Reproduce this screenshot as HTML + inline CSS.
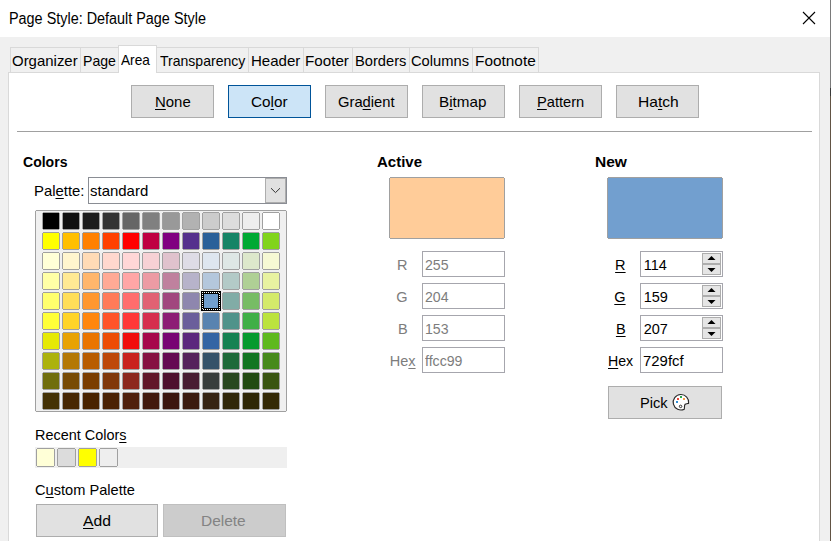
<!DOCTYPE html>
<html><head><meta charset="utf-8"><style>
html,body{margin:0;padding:0;width:831px;height:541px;overflow:hidden;background:#f0f0f0;font-family:"Liberation Sans", sans-serif;}
u{text-decoration:underline;text-underline-offset:2px;text-decoration-thickness:1px}
</style></head><body>
<div style="position:absolute;left:0px;top:0px;width:831px;height:37px;background:#fff"></div>
<div style="position:absolute;left:0px;top:37px;width:831px;height:504px;background:#f0f0f0"></div>
<div style="position:absolute;left:830px;top:0px;width:1px;height:88px;background:#7a7a7a"></div>
<div style="position:absolute;left:830px;top:88px;width:1px;height:8px;background:#3a3a3a"></div>
<div style="position:absolute;left:830px;top:96px;width:1px;height:445px;background:#625444"></div>
<div style="position:absolute;left:8.87px;top:10.95px;font-size:15.6px;line-height:15.6px;color:#000;white-space:nowrap;transform:scaleX(0.9233);transform-origin:0 0;">Page Style: Default Page Style</div>
<svg style="position:absolute;left:802px;top:11px" width="14" height="14" viewBox="0 0 14 14"><path d="M1 1L13 13M13 1L1 13" stroke="#000" stroke-width="1.1"/></svg>
<div style="position:absolute;left:8px;top:72px;width:812px;height:470px;background:#fff;border:1px solid #d9d9d9;box-sizing:border-box"></div>
<div style="position:absolute;left:10px;top:47px;width:71px;height:25px;background:#f0f0f0;border:1px solid #d9d9d9;box-sizing:border-box;border-bottom:none"></div>
<div style="position:absolute;left:80px;top:47px;width:39px;height:25px;background:#f0f0f0;border:1px solid #d9d9d9;box-sizing:border-box;border-bottom:none"></div>
<div style="position:absolute;left:118px;top:45px;width:39px;height:28px;background:#fff;border:1px solid #d9d9d9;box-sizing:border-box;border-bottom:none"></div>
<div style="position:absolute;left:156px;top:47px;width:93px;height:25px;background:#f0f0f0;border:1px solid #d9d9d9;box-sizing:border-box;border-bottom:none"></div>
<div style="position:absolute;left:248px;top:47px;width:56px;height:25px;background:#f0f0f0;border:1px solid #d9d9d9;box-sizing:border-box;border-bottom:none"></div>
<div style="position:absolute;left:303px;top:47px;width:50px;height:25px;background:#f0f0f0;border:1px solid #d9d9d9;box-sizing:border-box;border-bottom:none"></div>
<div style="position:absolute;left:352px;top:47px;width:58px;height:25px;background:#f0f0f0;border:1px solid #d9d9d9;box-sizing:border-box;border-bottom:none"></div>
<div style="position:absolute;left:409px;top:47px;width:64px;height:25px;background:#f0f0f0;border:1px solid #d9d9d9;box-sizing:border-box;border-bottom:none"></div>
<div style="position:absolute;left:472px;top:47px;width:67px;height:25px;background:#f0f0f0;border:1px solid #d9d9d9;box-sizing:border-box;border-bottom:none"></div>
<div style="position:absolute;left:11.67px;top:54.00px;font-size:14.5px;line-height:14.5px;color:#000;white-space:nowrap;transform:scaleX(1.0314);transform-origin:0 0;">Organizer</div>
<div style="position:absolute;left:82.82px;top:54.00px;font-size:14.5px;line-height:14.5px;color:#000;white-space:nowrap;transform:scaleX(0.9725);transform-origin:0 0;">Page</div>
<div style="position:absolute;left:120.88px;top:53.00px;font-size:14.5px;line-height:14.5px;color:#000;white-space:nowrap;transform:scaleX(0.9408);transform-origin:0 0;">Area</div>
<div style="position:absolute;left:159.56px;top:54.00px;font-size:14.5px;line-height:14.5px;color:#000;white-space:nowrap;transform:scaleX(0.9679);transform-origin:0 0;">Transparency</div>
<div style="position:absolute;left:250.59px;top:54.00px;font-size:14.5px;line-height:14.5px;color:#000;white-space:nowrap;transform:scaleX(1.0385);transform-origin:0 0;">Header</div>
<div style="position:absolute;left:305.24px;top:54.00px;font-size:14.5px;line-height:14.5px;color:#000;white-space:nowrap;transform:scaleX(1.0481);transform-origin:0 0;">Footer</div>
<div style="position:absolute;left:354.50px;top:54.00px;font-size:14.5px;line-height:14.5px;color:#000;white-space:nowrap;transform:scaleX(1.0113);transform-origin:0 0;">Borders</div>
<div style="position:absolute;left:411.18px;top:54.00px;font-size:14.5px;line-height:14.5px;color:#000;white-space:nowrap;transform:scaleX(1.0135);transform-origin:0 0;">Columns</div>
<div style="position:absolute;left:474.58px;top:54.00px;font-size:14.5px;line-height:14.5px;color:#000;white-space:nowrap;transform:scaleX(1.0606);transform-origin:0 0;">Footnote</div>
<div style="position:absolute;left:131px;top:85px;width:83px;height:33px;background:#e1e1e1;border:1px solid #adadad;box-sizing:border-box"></div>
<div style="position:absolute;left:154.68px;top:95.00px;font-size:14.5px;line-height:14.5px;color:#000;white-space:nowrap;transform:scaleX(1.0298);transform-origin:0 0;"><u>N</u>one</div>
<div style="position:absolute;left:228px;top:85px;width:83px;height:33px;background:#cce4f7;border:1px solid #005499;box-sizing:border-box"></div>
<div style="position:absolute;left:250.74px;top:95.00px;font-size:14.5px;line-height:14.5px;color:#000;white-space:nowrap;transform:scaleX(1.0533);transform-origin:0 0;">Co<u>l</u>or</div>
<div style="position:absolute;left:325px;top:85px;width:83px;height:33px;background:#e1e1e1;border:1px solid #adadad;box-sizing:border-box"></div>
<div style="position:absolute;left:337.98px;top:95.00px;font-size:14.5px;line-height:14.5px;color:#000;white-space:nowrap;transform:scaleX(1.0176);transform-origin:0 0;">Gra<u>d</u>ient</div>
<div style="position:absolute;left:422px;top:85px;width:83px;height:33px;background:#e1e1e1;border:1px solid #adadad;box-sizing:border-box"></div>
<div style="position:absolute;left:438.79px;top:95.00px;font-size:14.5px;line-height:14.5px;color:#000;white-space:nowrap;transform:scaleX(1.0497);transform-origin:0 0;">B<u>i</u>tmap</div>
<div style="position:absolute;left:519px;top:85px;width:83px;height:33px;background:#e1e1e1;border:1px solid #adadad;box-sizing:border-box"></div>
<div style="position:absolute;left:537.20px;top:95.00px;font-size:14.5px;line-height:14.5px;color:#000;white-space:nowrap;transform:scaleX(1.0099);transform-origin:0 0;"><u>P</u>attern</div>
<div style="position:absolute;left:616px;top:85px;width:83px;height:33px;background:#e1e1e1;border:1px solid #adadad;box-sizing:border-box"></div>
<div style="position:absolute;left:637.58px;top:95.00px;font-size:14.5px;line-height:14.5px;color:#000;white-space:nowrap;transform:scaleX(1.0749);transform-origin:0 0;">Ha<u>t</u>ch</div>
<div style="position:absolute;left:17px;top:131px;width:795px;height:1px;background:#a0a0a0"></div>
<div style="position:absolute;left:22.83px;top:155.00px;font-size:14.5px;line-height:14.5px;color:#000;white-space:nowrap;font-weight:bold;transform:scaleX(0.9677);transform-origin:0 0;">Colors</div>
<div style="position:absolute;left:34.48px;top:184.00px;font-size:14.5px;line-height:14.5px;color:#000;white-space:nowrap;transform:scaleX(1.0254);transform-origin:0 0;">Pal<u>e</u>tte:</div>
<div style="position:absolute;left:88px;top:177px;width:199px;height:27px;background:#fff;border:1px solid #8a8d94;box-sizing:border-box"></div>
<div style="position:absolute;left:265px;top:178px;width:21px;height:25px;background:#e1e1e1;border:1px solid #adadad;box-sizing:border-box"></div>
<svg style="position:absolute;left:265px;top:178px" width="21" height="25" viewBox="0 0 21 25"><path d="M6 10.2L10.5 14.6L15 10.2" fill="none" stroke="#333" stroke-width="1"/></svg>
<div style="position:absolute;left:89.72px;top:184.00px;font-size:14.5px;line-height:14.5px;color:#000;white-space:nowrap;transform:scaleX(1.0323);transform-origin:0 0;">standard</div>
<svg style="position:absolute;left:0;top:0" width="831" height="541" shape-rendering="crispEdges"><rect x="35" y="210" width="252" height="202" fill="#f0f0f0"/><rect x="36" y="210" width="250" height="1" fill="#a0a0a0"/><rect x="36" y="411" width="250" height="1" fill="#a0a0a0"/><rect x="35" y="211" width="1" height="200" fill="#a0a0a0"/><rect x="286" y="211" width="1" height="200" fill="#a0a0a0"/><rect x="43" y="212" width="16" height="18" fill="#a0a0a0"/><rect x="42" y="213" width="18" height="16" fill="#a0a0a0"/><rect x="43" y="213" width="16" height="16" fill="#000000"/><rect x="63" y="212" width="16" height="18" fill="#a0a0a0"/><rect x="62" y="213" width="18" height="16" fill="#a0a0a0"/><rect x="63" y="213" width="16" height="16" fill="#111111"/><rect x="83" y="212" width="16" height="18" fill="#a0a0a0"/><rect x="82" y="213" width="18" height="16" fill="#a0a0a0"/><rect x="83" y="213" width="16" height="16" fill="#1c1c1c"/><rect x="103" y="212" width="16" height="18" fill="#a0a0a0"/><rect x="102" y="213" width="18" height="16" fill="#a0a0a0"/><rect x="103" y="213" width="16" height="16" fill="#333333"/><rect x="123" y="212" width="16" height="18" fill="#a0a0a0"/><rect x="122" y="213" width="18" height="16" fill="#a0a0a0"/><rect x="123" y="213" width="16" height="16" fill="#666666"/><rect x="143" y="212" width="16" height="18" fill="#a0a0a0"/><rect x="142" y="213" width="18" height="16" fill="#a0a0a0"/><rect x="143" y="213" width="16" height="16" fill="#808080"/><rect x="163" y="212" width="16" height="18" fill="#a0a0a0"/><rect x="162" y="213" width="18" height="16" fill="#a0a0a0"/><rect x="163" y="213" width="16" height="16" fill="#999999"/><rect x="183" y="212" width="16" height="18" fill="#a0a0a0"/><rect x="182" y="213" width="18" height="16" fill="#a0a0a0"/><rect x="183" y="213" width="16" height="16" fill="#b2b2b2"/><rect x="203" y="212" width="16" height="18" fill="#a0a0a0"/><rect x="202" y="213" width="18" height="16" fill="#a0a0a0"/><rect x="203" y="213" width="16" height="16" fill="#cccccc"/><rect x="223" y="212" width="16" height="18" fill="#a0a0a0"/><rect x="222" y="213" width="18" height="16" fill="#a0a0a0"/><rect x="223" y="213" width="16" height="16" fill="#dddddd"/><rect x="243" y="212" width="16" height="18" fill="#a0a0a0"/><rect x="242" y="213" width="18" height="16" fill="#a0a0a0"/><rect x="243" y="213" width="16" height="16" fill="#eeeeee"/><rect x="263" y="212" width="16" height="18" fill="#a0a0a0"/><rect x="262" y="213" width="18" height="16" fill="#a0a0a0"/><rect x="263" y="213" width="16" height="16" fill="#ffffff"/><rect x="43" y="232" width="16" height="18" fill="#a0a0a0"/><rect x="42" y="233" width="18" height="16" fill="#a0a0a0"/><rect x="43" y="233" width="16" height="16" fill="#ffff00"/><rect x="63" y="232" width="16" height="18" fill="#a0a0a0"/><rect x="62" y="233" width="18" height="16" fill="#a0a0a0"/><rect x="63" y="233" width="16" height="16" fill="#ffbf00"/><rect x="83" y="232" width="16" height="18" fill="#a0a0a0"/><rect x="82" y="233" width="18" height="16" fill="#a0a0a0"/><rect x="83" y="233" width="16" height="16" fill="#ff8000"/><rect x="103" y="232" width="16" height="18" fill="#a0a0a0"/><rect x="102" y="233" width="18" height="16" fill="#a0a0a0"/><rect x="103" y="233" width="16" height="16" fill="#ff4000"/><rect x="123" y="232" width="16" height="18" fill="#a0a0a0"/><rect x="122" y="233" width="18" height="16" fill="#a0a0a0"/><rect x="123" y="233" width="16" height="16" fill="#ff0000"/><rect x="143" y="232" width="16" height="18" fill="#a0a0a0"/><rect x="142" y="233" width="18" height="16" fill="#a0a0a0"/><rect x="143" y="233" width="16" height="16" fill="#bf0041"/><rect x="163" y="232" width="16" height="18" fill="#a0a0a0"/><rect x="162" y="233" width="18" height="16" fill="#a0a0a0"/><rect x="163" y="233" width="16" height="16" fill="#800080"/><rect x="183" y="232" width="16" height="18" fill="#a0a0a0"/><rect x="182" y="233" width="18" height="16" fill="#a0a0a0"/><rect x="183" y="233" width="16" height="16" fill="#55308d"/><rect x="203" y="232" width="16" height="18" fill="#a0a0a0"/><rect x="202" y="233" width="18" height="16" fill="#a0a0a0"/><rect x="203" y="233" width="16" height="16" fill="#2a6099"/><rect x="223" y="232" width="16" height="18" fill="#a0a0a0"/><rect x="222" y="233" width="18" height="16" fill="#a0a0a0"/><rect x="223" y="233" width="16" height="16" fill="#158466"/><rect x="243" y="232" width="16" height="18" fill="#a0a0a0"/><rect x="242" y="233" width="18" height="16" fill="#a0a0a0"/><rect x="243" y="233" width="16" height="16" fill="#00a933"/><rect x="263" y="232" width="16" height="18" fill="#a0a0a0"/><rect x="262" y="233" width="18" height="16" fill="#a0a0a0"/><rect x="263" y="233" width="16" height="16" fill="#81d41a"/><rect x="43" y="252" width="16" height="18" fill="#a0a0a0"/><rect x="42" y="253" width="18" height="16" fill="#a0a0a0"/><rect x="43" y="253" width="16" height="16" fill="#ffffd7"/><rect x="63" y="252" width="16" height="18" fill="#a0a0a0"/><rect x="62" y="253" width="18" height="16" fill="#a0a0a0"/><rect x="63" y="253" width="16" height="16" fill="#fff5ce"/><rect x="83" y="252" width="16" height="18" fill="#a0a0a0"/><rect x="82" y="253" width="18" height="16" fill="#a0a0a0"/><rect x="83" y="253" width="16" height="16" fill="#ffdbb6"/><rect x="103" y="252" width="16" height="18" fill="#a0a0a0"/><rect x="102" y="253" width="18" height="16" fill="#a0a0a0"/><rect x="103" y="253" width="16" height="16" fill="#ffd8ce"/><rect x="123" y="252" width="16" height="18" fill="#a0a0a0"/><rect x="122" y="253" width="18" height="16" fill="#a0a0a0"/><rect x="123" y="253" width="16" height="16" fill="#ffd7d7"/><rect x="143" y="252" width="16" height="18" fill="#a0a0a0"/><rect x="142" y="253" width="18" height="16" fill="#a0a0a0"/><rect x="143" y="253" width="16" height="16" fill="#f7d1d5"/><rect x="163" y="252" width="16" height="18" fill="#a0a0a0"/><rect x="162" y="253" width="18" height="16" fill="#a0a0a0"/><rect x="163" y="253" width="16" height="16" fill="#e0c2cd"/><rect x="183" y="252" width="16" height="18" fill="#a0a0a0"/><rect x="182" y="253" width="18" height="16" fill="#a0a0a0"/><rect x="183" y="253" width="16" height="16" fill="#dedce6"/><rect x="203" y="252" width="16" height="18" fill="#a0a0a0"/><rect x="202" y="253" width="18" height="16" fill="#a0a0a0"/><rect x="203" y="253" width="16" height="16" fill="#dee6ef"/><rect x="223" y="252" width="16" height="18" fill="#a0a0a0"/><rect x="222" y="253" width="18" height="16" fill="#a0a0a0"/><rect x="223" y="253" width="16" height="16" fill="#dee7e5"/><rect x="243" y="252" width="16" height="18" fill="#a0a0a0"/><rect x="242" y="253" width="18" height="16" fill="#a0a0a0"/><rect x="243" y="253" width="16" height="16" fill="#dde8cb"/><rect x="263" y="252" width="16" height="18" fill="#a0a0a0"/><rect x="262" y="253" width="18" height="16" fill="#a0a0a0"/><rect x="263" y="253" width="16" height="16" fill="#f6f9d4"/><rect x="43" y="272" width="16" height="18" fill="#a0a0a0"/><rect x="42" y="273" width="18" height="16" fill="#a0a0a0"/><rect x="43" y="273" width="16" height="16" fill="#ffffa6"/><rect x="63" y="272" width="16" height="18" fill="#a0a0a0"/><rect x="62" y="273" width="18" height="16" fill="#a0a0a0"/><rect x="63" y="273" width="16" height="16" fill="#ffe994"/><rect x="83" y="272" width="16" height="18" fill="#a0a0a0"/><rect x="82" y="273" width="18" height="16" fill="#a0a0a0"/><rect x="83" y="273" width="16" height="16" fill="#ffb66c"/><rect x="103" y="272" width="16" height="18" fill="#a0a0a0"/><rect x="102" y="273" width="18" height="16" fill="#a0a0a0"/><rect x="103" y="273" width="16" height="16" fill="#ffaa95"/><rect x="123" y="272" width="16" height="18" fill="#a0a0a0"/><rect x="122" y="273" width="18" height="16" fill="#a0a0a0"/><rect x="123" y="273" width="16" height="16" fill="#ffa6a6"/><rect x="143" y="272" width="16" height="18" fill="#a0a0a0"/><rect x="142" y="273" width="18" height="16" fill="#a0a0a0"/><rect x="143" y="273" width="16" height="16" fill="#ec9ba4"/><rect x="163" y="272" width="16" height="18" fill="#a0a0a0"/><rect x="162" y="273" width="18" height="16" fill="#a0a0a0"/><rect x="163" y="273" width="16" height="16" fill="#bf819e"/><rect x="183" y="272" width="16" height="18" fill="#a0a0a0"/><rect x="182" y="273" width="18" height="16" fill="#a0a0a0"/><rect x="183" y="273" width="16" height="16" fill="#b7b3ca"/><rect x="203" y="272" width="16" height="18" fill="#a0a0a0"/><rect x="202" y="273" width="18" height="16" fill="#a0a0a0"/><rect x="203" y="273" width="16" height="16" fill="#b4c7dc"/><rect x="223" y="272" width="16" height="18" fill="#a0a0a0"/><rect x="222" y="273" width="18" height="16" fill="#a0a0a0"/><rect x="223" y="273" width="16" height="16" fill="#b3cac7"/><rect x="243" y="272" width="16" height="18" fill="#a0a0a0"/><rect x="242" y="273" width="18" height="16" fill="#a0a0a0"/><rect x="243" y="273" width="16" height="16" fill="#afd095"/><rect x="263" y="272" width="16" height="18" fill="#a0a0a0"/><rect x="262" y="273" width="18" height="16" fill="#a0a0a0"/><rect x="263" y="273" width="16" height="16" fill="#e8f2a1"/><rect x="43" y="292" width="16" height="18" fill="#a0a0a0"/><rect x="42" y="293" width="18" height="16" fill="#a0a0a0"/><rect x="43" y="293" width="16" height="16" fill="#ffff6d"/><rect x="63" y="292" width="16" height="18" fill="#a0a0a0"/><rect x="62" y="293" width="18" height="16" fill="#a0a0a0"/><rect x="63" y="293" width="16" height="16" fill="#ffde59"/><rect x="83" y="292" width="16" height="18" fill="#a0a0a0"/><rect x="82" y="293" width="18" height="16" fill="#a0a0a0"/><rect x="83" y="293" width="16" height="16" fill="#ff972f"/><rect x="103" y="292" width="16" height="18" fill="#a0a0a0"/><rect x="102" y="293" width="18" height="16" fill="#a0a0a0"/><rect x="103" y="293" width="16" height="16" fill="#ff7b59"/><rect x="123" y="292" width="16" height="18" fill="#a0a0a0"/><rect x="122" y="293" width="18" height="16" fill="#a0a0a0"/><rect x="123" y="293" width="16" height="16" fill="#ff6d6d"/><rect x="143" y="292" width="16" height="18" fill="#a0a0a0"/><rect x="142" y="293" width="18" height="16" fill="#a0a0a0"/><rect x="143" y="293" width="16" height="16" fill="#e16173"/><rect x="163" y="292" width="16" height="18" fill="#a0a0a0"/><rect x="162" y="293" width="18" height="16" fill="#a0a0a0"/><rect x="163" y="293" width="16" height="16" fill="#a1467e"/><rect x="183" y="292" width="16" height="18" fill="#a0a0a0"/><rect x="182" y="293" width="18" height="16" fill="#a0a0a0"/><rect x="183" y="293" width="16" height="16" fill="#8e86ae"/><rect x="223" y="292" width="16" height="18" fill="#a0a0a0"/><rect x="222" y="293" width="18" height="16" fill="#a0a0a0"/><rect x="223" y="293" width="16" height="16" fill="#81aca6"/><rect x="243" y="292" width="16" height="18" fill="#a0a0a0"/><rect x="242" y="293" width="18" height="16" fill="#a0a0a0"/><rect x="243" y="293" width="16" height="16" fill="#77bc65"/><rect x="263" y="292" width="16" height="18" fill="#a0a0a0"/><rect x="262" y="293" width="18" height="16" fill="#a0a0a0"/><rect x="263" y="293" width="16" height="16" fill="#d4ea6b"/><rect x="43" y="312" width="16" height="18" fill="#a0a0a0"/><rect x="42" y="313" width="18" height="16" fill="#a0a0a0"/><rect x="43" y="313" width="16" height="16" fill="#ffff38"/><rect x="63" y="312" width="16" height="18" fill="#a0a0a0"/><rect x="62" y="313" width="18" height="16" fill="#a0a0a0"/><rect x="63" y="313" width="16" height="16" fill="#ffd428"/><rect x="83" y="312" width="16" height="18" fill="#a0a0a0"/><rect x="82" y="313" width="18" height="16" fill="#a0a0a0"/><rect x="83" y="313" width="16" height="16" fill="#ff860d"/><rect x="103" y="312" width="16" height="18" fill="#a0a0a0"/><rect x="102" y="313" width="18" height="16" fill="#a0a0a0"/><rect x="103" y="313" width="16" height="16" fill="#ff5429"/><rect x="123" y="312" width="16" height="18" fill="#a0a0a0"/><rect x="122" y="313" width="18" height="16" fill="#a0a0a0"/><rect x="123" y="313" width="16" height="16" fill="#ff3838"/><rect x="143" y="312" width="16" height="18" fill="#a0a0a0"/><rect x="142" y="313" width="18" height="16" fill="#a0a0a0"/><rect x="143" y="313" width="16" height="16" fill="#d62e4e"/><rect x="163" y="312" width="16" height="18" fill="#a0a0a0"/><rect x="162" y="313" width="18" height="16" fill="#a0a0a0"/><rect x="163" y="313" width="16" height="16" fill="#8d1d75"/><rect x="183" y="312" width="16" height="18" fill="#a0a0a0"/><rect x="182" y="313" width="18" height="16" fill="#a0a0a0"/><rect x="183" y="313" width="16" height="16" fill="#6b5e9b"/><rect x="203" y="312" width="16" height="18" fill="#a0a0a0"/><rect x="202" y="313" width="18" height="16" fill="#a0a0a0"/><rect x="203" y="313" width="16" height="16" fill="#5983b0"/><rect x="223" y="312" width="16" height="18" fill="#a0a0a0"/><rect x="222" y="313" width="18" height="16" fill="#a0a0a0"/><rect x="223" y="313" width="16" height="16" fill="#50938a"/><rect x="243" y="312" width="16" height="18" fill="#a0a0a0"/><rect x="242" y="313" width="18" height="16" fill="#a0a0a0"/><rect x="243" y="313" width="16" height="16" fill="#3faf46"/><rect x="263" y="312" width="16" height="18" fill="#a0a0a0"/><rect x="262" y="313" width="18" height="16" fill="#a0a0a0"/><rect x="263" y="313" width="16" height="16" fill="#bbe33d"/><rect x="43" y="332" width="16" height="18" fill="#a0a0a0"/><rect x="42" y="333" width="18" height="16" fill="#a0a0a0"/><rect x="43" y="333" width="16" height="16" fill="#e6e905"/><rect x="63" y="332" width="16" height="18" fill="#a0a0a0"/><rect x="62" y="333" width="18" height="16" fill="#a0a0a0"/><rect x="63" y="333" width="16" height="16" fill="#e8a202"/><rect x="83" y="332" width="16" height="18" fill="#a0a0a0"/><rect x="82" y="333" width="18" height="16" fill="#a0a0a0"/><rect x="83" y="333" width="16" height="16" fill="#ea7500"/><rect x="103" y="332" width="16" height="18" fill="#a0a0a0"/><rect x="102" y="333" width="18" height="16" fill="#a0a0a0"/><rect x="103" y="333" width="16" height="16" fill="#ed4c05"/><rect x="123" y="332" width="16" height="18" fill="#a0a0a0"/><rect x="122" y="333" width="18" height="16" fill="#a0a0a0"/><rect x="123" y="333" width="16" height="16" fill="#f10d0c"/><rect x="143" y="332" width="16" height="18" fill="#a0a0a0"/><rect x="142" y="333" width="18" height="16" fill="#a0a0a0"/><rect x="143" y="333" width="16" height="16" fill="#a7074b"/><rect x="163" y="332" width="16" height="18" fill="#a0a0a0"/><rect x="162" y="333" width="18" height="16" fill="#a0a0a0"/><rect x="163" y="333" width="16" height="16" fill="#780373"/><rect x="183" y="332" width="16" height="18" fill="#a0a0a0"/><rect x="182" y="333" width="18" height="16" fill="#a0a0a0"/><rect x="183" y="333" width="16" height="16" fill="#5b277d"/><rect x="203" y="332" width="16" height="18" fill="#a0a0a0"/><rect x="202" y="333" width="18" height="16" fill="#a0a0a0"/><rect x="203" y="333" width="16" height="16" fill="#3465a4"/><rect x="223" y="332" width="16" height="18" fill="#a0a0a0"/><rect x="222" y="333" width="18" height="16" fill="#a0a0a0"/><rect x="223" y="333" width="16" height="16" fill="#168253"/><rect x="243" y="332" width="16" height="18" fill="#a0a0a0"/><rect x="242" y="333" width="18" height="16" fill="#a0a0a0"/><rect x="243" y="333" width="16" height="16" fill="#069a2e"/><rect x="263" y="332" width="16" height="18" fill="#a0a0a0"/><rect x="262" y="333" width="18" height="16" fill="#a0a0a0"/><rect x="263" y="333" width="16" height="16" fill="#5eb91e"/><rect x="43" y="352" width="16" height="18" fill="#a0a0a0"/><rect x="42" y="353" width="18" height="16" fill="#a0a0a0"/><rect x="43" y="353" width="16" height="16" fill="#acb20c"/><rect x="63" y="352" width="16" height="18" fill="#a0a0a0"/><rect x="62" y="353" width="18" height="16" fill="#a0a0a0"/><rect x="63" y="353" width="16" height="16" fill="#b47804"/><rect x="83" y="352" width="16" height="18" fill="#a0a0a0"/><rect x="82" y="353" width="18" height="16" fill="#a0a0a0"/><rect x="83" y="353" width="16" height="16" fill="#b85c00"/><rect x="103" y="352" width="16" height="18" fill="#a0a0a0"/><rect x="102" y="353" width="18" height="16" fill="#a0a0a0"/><rect x="103" y="353" width="16" height="16" fill="#be480a"/><rect x="123" y="352" width="16" height="18" fill="#a0a0a0"/><rect x="122" y="353" width="18" height="16" fill="#a0a0a0"/><rect x="123" y="353" width="16" height="16" fill="#c9211e"/><rect x="143" y="352" width="16" height="18" fill="#a0a0a0"/><rect x="142" y="353" width="18" height="16" fill="#a0a0a0"/><rect x="143" y="353" width="16" height="16" fill="#861141"/><rect x="163" y="352" width="16" height="18" fill="#a0a0a0"/><rect x="162" y="353" width="18" height="16" fill="#a0a0a0"/><rect x="163" y="353" width="16" height="16" fill="#650953"/><rect x="183" y="352" width="16" height="18" fill="#a0a0a0"/><rect x="182" y="353" width="18" height="16" fill="#a0a0a0"/><rect x="183" y="353" width="16" height="16" fill="#55215b"/><rect x="203" y="352" width="16" height="18" fill="#a0a0a0"/><rect x="202" y="353" width="18" height="16" fill="#a0a0a0"/><rect x="203" y="353" width="16" height="16" fill="#355269"/><rect x="223" y="352" width="16" height="18" fill="#a0a0a0"/><rect x="222" y="353" width="18" height="16" fill="#a0a0a0"/><rect x="223" y="353" width="16" height="16" fill="#1e6a39"/><rect x="243" y="352" width="16" height="18" fill="#a0a0a0"/><rect x="242" y="353" width="18" height="16" fill="#a0a0a0"/><rect x="243" y="353" width="16" height="16" fill="#127622"/><rect x="263" y="352" width="16" height="18" fill="#a0a0a0"/><rect x="262" y="353" width="18" height="16" fill="#a0a0a0"/><rect x="263" y="353" width="16" height="16" fill="#468a1a"/><rect x="43" y="372" width="16" height="18" fill="#a0a0a0"/><rect x="42" y="373" width="18" height="16" fill="#a0a0a0"/><rect x="43" y="373" width="16" height="16" fill="#706e0c"/><rect x="63" y="372" width="16" height="18" fill="#a0a0a0"/><rect x="62" y="373" width="18" height="16" fill="#a0a0a0"/><rect x="63" y="373" width="16" height="16" fill="#784b04"/><rect x="83" y="372" width="16" height="18" fill="#a0a0a0"/><rect x="82" y="373" width="18" height="16" fill="#a0a0a0"/><rect x="83" y="373" width="16" height="16" fill="#7b3d00"/><rect x="103" y="372" width="16" height="18" fill="#a0a0a0"/><rect x="102" y="373" width="18" height="16" fill="#a0a0a0"/><rect x="103" y="373" width="16" height="16" fill="#813709"/><rect x="123" y="372" width="16" height="18" fill="#a0a0a0"/><rect x="122" y="373" width="18" height="16" fill="#a0a0a0"/><rect x="123" y="373" width="16" height="16" fill="#8d281e"/><rect x="143" y="372" width="16" height="18" fill="#a0a0a0"/><rect x="142" y="373" width="18" height="16" fill="#a0a0a0"/><rect x="143" y="373" width="16" height="16" fill="#611729"/><rect x="163" y="372" width="16" height="18" fill="#a0a0a0"/><rect x="162" y="373" width="18" height="16" fill="#a0a0a0"/><rect x="163" y="373" width="16" height="16" fill="#4e102d"/><rect x="183" y="372" width="16" height="18" fill="#a0a0a0"/><rect x="182" y="373" width="18" height="16" fill="#a0a0a0"/><rect x="183" y="373" width="16" height="16" fill="#481d32"/><rect x="203" y="372" width="16" height="18" fill="#a0a0a0"/><rect x="202" y="373" width="18" height="16" fill="#a0a0a0"/><rect x="203" y="373" width="16" height="16" fill="#383d3c"/><rect x="223" y="372" width="16" height="18" fill="#a0a0a0"/><rect x="222" y="373" width="18" height="16" fill="#a0a0a0"/><rect x="223" y="373" width="16" height="16" fill="#28471f"/><rect x="243" y="372" width="16" height="18" fill="#a0a0a0"/><rect x="242" y="373" width="18" height="16" fill="#a0a0a0"/><rect x="243" y="373" width="16" height="16" fill="#224b12"/><rect x="263" y="372" width="16" height="18" fill="#a0a0a0"/><rect x="262" y="373" width="18" height="16" fill="#a0a0a0"/><rect x="263" y="373" width="16" height="16" fill="#395511"/><rect x="43" y="392" width="16" height="18" fill="#a0a0a0"/><rect x="42" y="393" width="18" height="16" fill="#a0a0a0"/><rect x="43" y="393" width="16" height="16" fill="#443205"/><rect x="63" y="392" width="16" height="18" fill="#a0a0a0"/><rect x="62" y="393" width="18" height="16" fill="#a0a0a0"/><rect x="63" y="393" width="16" height="16" fill="#472702"/><rect x="83" y="392" width="16" height="18" fill="#a0a0a0"/><rect x="82" y="393" width="18" height="16" fill="#a0a0a0"/><rect x="83" y="393" width="16" height="16" fill="#492300"/><rect x="103" y="392" width="16" height="18" fill="#a0a0a0"/><rect x="102" y="393" width="18" height="16" fill="#a0a0a0"/><rect x="103" y="393" width="16" height="16" fill="#4b2204"/><rect x="123" y="392" width="16" height="18" fill="#a0a0a0"/><rect x="122" y="393" width="18" height="16" fill="#a0a0a0"/><rect x="123" y="393" width="16" height="16" fill="#50200c"/><rect x="143" y="392" width="16" height="18" fill="#a0a0a0"/><rect x="142" y="393" width="18" height="16" fill="#a0a0a0"/><rect x="143" y="393" width="16" height="16" fill="#41190d"/><rect x="163" y="392" width="16" height="18" fill="#a0a0a0"/><rect x="162" y="393" width="18" height="16" fill="#a0a0a0"/><rect x="163" y="393" width="16" height="16" fill="#3b160e"/><rect x="183" y="392" width="16" height="18" fill="#a0a0a0"/><rect x="182" y="393" width="18" height="16" fill="#a0a0a0"/><rect x="183" y="393" width="16" height="16" fill="#3a1a0e"/><rect x="203" y="392" width="16" height="18" fill="#a0a0a0"/><rect x="202" y="393" width="18" height="16" fill="#a0a0a0"/><rect x="203" y="393" width="16" height="16" fill="#362413"/><rect x="223" y="392" width="16" height="18" fill="#a0a0a0"/><rect x="222" y="393" width="18" height="16" fill="#a0a0a0"/><rect x="223" y="393" width="16" height="16" fill="#302709"/><rect x="243" y="392" width="16" height="18" fill="#a0a0a0"/><rect x="242" y="393" width="18" height="16" fill="#a0a0a0"/><rect x="243" y="393" width="16" height="16" fill="#2e2706"/><rect x="263" y="392" width="16" height="18" fill="#a0a0a0"/><rect x="262" y="393" width="18" height="16" fill="#a0a0a0"/><rect x="263" y="393" width="16" height="16" fill="#342a06"/><rect x="201" y="291" width="20" height="20" fill="#000"/><rect x="202" y="292" width="1" height="1" fill="#fff"/><rect x="202" y="294" width="1" height="1" fill="#fff"/><rect x="202" y="296" width="1" height="1" fill="#fff"/><rect x="202" y="298" width="1" height="1" fill="#fff"/><rect x="202" y="300" width="1" height="1" fill="#fff"/><rect x="202" y="302" width="1" height="1" fill="#fff"/><rect x="202" y="304" width="1" height="1" fill="#fff"/><rect x="202" y="306" width="1" height="1" fill="#fff"/><rect x="202" y="308" width="1" height="1" fill="#fff"/><rect x="203" y="309" width="1" height="1" fill="#fff"/><rect x="204" y="292" width="1" height="1" fill="#fff"/><rect x="205" y="309" width="1" height="1" fill="#fff"/><rect x="206" y="292" width="1" height="1" fill="#fff"/><rect x="207" y="309" width="1" height="1" fill="#fff"/><rect x="208" y="292" width="1" height="1" fill="#fff"/><rect x="209" y="309" width="1" height="1" fill="#fff"/><rect x="210" y="292" width="1" height="1" fill="#fff"/><rect x="211" y="309" width="1" height="1" fill="#fff"/><rect x="212" y="292" width="1" height="1" fill="#fff"/><rect x="213" y="309" width="1" height="1" fill="#fff"/><rect x="214" y="292" width="1" height="1" fill="#fff"/><rect x="215" y="309" width="1" height="1" fill="#fff"/><rect x="216" y="292" width="1" height="1" fill="#fff"/><rect x="217" y="309" width="1" height="1" fill="#fff"/><rect x="218" y="292" width="1" height="1" fill="#fff"/><rect x="219" y="293" width="1" height="1" fill="#fff"/><rect x="219" y="295" width="1" height="1" fill="#fff"/><rect x="219" y="297" width="1" height="1" fill="#fff"/><rect x="219" y="299" width="1" height="1" fill="#fff"/><rect x="219" y="301" width="1" height="1" fill="#fff"/><rect x="219" y="303" width="1" height="1" fill="#fff"/><rect x="219" y="305" width="1" height="1" fill="#fff"/><rect x="219" y="307" width="1" height="1" fill="#fff"/><rect x="219" y="309" width="1" height="1" fill="#fff"/><rect x="204" y="294" width="14" height="14" fill="#729fcf"/><rect x="35" y="447" width="252" height="21" fill="#efefef"/><rect x="37" y="448" width="17" height="19" fill="#a0a0a0"/><rect x="36" y="449" width="19" height="17" fill="#a0a0a0"/><rect x="37" y="449" width="17" height="17" fill="#ffffd7"/><rect x="58" y="448" width="17" height="19" fill="#a0a0a0"/><rect x="57" y="449" width="19" height="17" fill="#a0a0a0"/><rect x="58" y="449" width="17" height="17" fill="#dcdcdc"/><rect x="79" y="448" width="17" height="19" fill="#a0a0a0"/><rect x="78" y="449" width="19" height="17" fill="#a0a0a0"/><rect x="79" y="449" width="17" height="17" fill="#ffff00"/><rect x="100" y="448" width="17" height="19" fill="#a0a0a0"/><rect x="99" y="449" width="19" height="17" fill="#a0a0a0"/><rect x="100" y="449" width="17" height="17" fill="#eeeeee"/></svg>
<div style="position:absolute;left:34.80px;top:428.00px;font-size:14.5px;line-height:14.5px;color:#000;white-space:nowrap;transform:scaleX(0.9952);transform-origin:0 0;">Recent Color<u>s</u></div>
<div style="position:absolute;left:34.62px;top:483.00px;font-size:14.5px;line-height:14.5px;color:#000;white-space:nowrap;transform:scaleX(1.0080);transform-origin:0 0;">C<u>u</u>stom Palette</div>
<div style="position:absolute;left:36px;top:504px;width:122px;height:33px;background:#e1e1e1;border:1px solid #adadad;box-sizing:border-box"></div>
<div style="position:absolute;left:83.00px;top:514.00px;font-size:14.5px;line-height:14.5px;color:#000;white-space:nowrap;transform:scaleX(1.0800);transform-origin:0 0;"><u>A</u>dd</div>
<div style="position:absolute;left:163px;top:504px;width:123px;height:33px;background:#cccccc;border:1px solid #bfbfbf;box-sizing:border-box"></div>
<div style="position:absolute;left:201.34px;top:514.00px;font-size:14.5px;line-height:14.5px;color:#838383;white-space:nowrap;transform:scaleX(1.0665);transform-origin:0 0;">Delete</div>
<div style="position:absolute;left:376.66px;top:155.00px;font-size:14.5px;line-height:14.5px;color:#000;white-space:nowrap;font-weight:bold;transform:scaleX(1.0339);transform-origin:0 0;">Active</div>
<svg style="position:absolute;left:389px;top:177px" width="116" height="62" shape-rendering="crispEdges"><rect x="1" y="0" width="114" height="62" fill="#a0a0a0"/><rect x="0" y="1" width="116" height="60" fill="#a0a0a0"/><rect x="1" y="1" width="114" height="60" fill="#ffcc99"/></svg>
<div style="position:absolute;left:422px;top:251px;width:83px;height:26px;background:#fff;border:1px solid #a6a6ad;box-sizing:border-box"></div>
<div style="position:absolute;left:424.61px;top:258.00px;font-size:14.5px;line-height:14.5px;color:#7d7d7d;white-space:nowrap;transform:scaleX(0.9740);transform-origin:0 0;">255</div>
<div style="position:absolute;left:307.60px;width:100px;text-align:right;top:258.00px;font-size:14.5px;line-height:14.5px;color:#7d7d7d;white-space:nowrap;">R</div>
<div style="position:absolute;left:422px;top:283px;width:83px;height:26px;background:#fff;border:1px solid #a6a6ad;box-sizing:border-box"></div>
<div style="position:absolute;left:424.61px;top:290.00px;font-size:14.5px;line-height:14.5px;color:#7d7d7d;white-space:nowrap;transform:scaleX(0.9740);transform-origin:0 0;">204</div>
<div style="position:absolute;left:307.60px;width:100px;text-align:right;top:290.00px;font-size:14.5px;line-height:14.5px;color:#7d7d7d;white-space:nowrap;">G</div>
<div style="position:absolute;left:422px;top:315px;width:83px;height:26px;background:#fff;border:1px solid #a6a6ad;box-sizing:border-box"></div>
<div style="position:absolute;left:424.61px;top:322.00px;font-size:14.5px;line-height:14.5px;color:#7d7d7d;white-space:nowrap;transform:scaleX(0.9740);transform-origin:0 0;">153</div>
<div style="position:absolute;left:307.60px;width:100px;text-align:right;top:322.00px;font-size:14.5px;line-height:14.5px;color:#7d7d7d;white-space:nowrap;">B</div>
<div style="position:absolute;left:422px;top:347px;width:83px;height:26px;background:#fff;border:1px solid #a6a6ad;box-sizing:border-box"></div>
<div style="position:absolute;left:424.61px;top:354.00px;font-size:14.5px;line-height:14.5px;color:#7d7d7d;white-space:nowrap;transform:scaleX(0.9740);transform-origin:0 0;">ffcc99</div>
<div style="position:absolute;left:315.60px;width:100px;text-align:right;top:354.00px;font-size:14.5px;line-height:14.5px;color:#7d7d7d;white-space:nowrap;">He<u>x</u></div>
<div style="position:absolute;left:594.84px;top:155.00px;font-size:14.5px;line-height:14.5px;color:#000;white-space:nowrap;font-weight:bold;transform:scaleX(1.0710);transform-origin:0 0;">New</div>
<svg style="position:absolute;left:607px;top:177px" width="116" height="62" shape-rendering="crispEdges"><rect x="1" y="0" width="114" height="62" fill="#a0a0a0"/><rect x="0" y="1" width="116" height="60" fill="#a0a0a0"/><rect x="1" y="1" width="114" height="60" fill="#729fcf"/></svg>
<div style="position:absolute;left:640px;top:251px;width:83px;height:26px;background:#fff;border:1px solid #a6a6ad;box-sizing:border-box"></div>
<div style="position:absolute;left:643.70px;top:258.00px;font-size:14.5px;line-height:14.5px;color:#000;white-space:nowrap;">114</div>
<div style="position:absolute;left:525.60px;width:100px;text-align:right;top:258.00px;font-size:14.5px;line-height:14.5px;color:#000;white-space:nowrap;"><u>R</u></div>
<div style="position:absolute;left:702px;top:253px;width:19px;height:11px;background:#e5e5e5;border:1px solid #adadad;box-sizing:border-box"></div>
<div style="position:absolute;left:702px;top:264px;width:19px;height:11px;background:#e5e5e5;border:1px solid #adadad;box-sizing:border-box"></div>
<svg style="position:absolute;left:702px;top:251px" width="19" height="26" viewBox="0 0 19 26"><path d="M5.5 9L9.5 5L13.5 9Z" fill="#000"/><path d="M5.5 17L9.5 21L13.5 17Z" fill="#000"/></svg>
<div style="position:absolute;left:640px;top:283px;width:83px;height:26px;background:#fff;border:1px solid #a6a6ad;box-sizing:border-box"></div>
<div style="position:absolute;left:643.70px;top:290.00px;font-size:14.5px;line-height:14.5px;color:#000;white-space:nowrap;">159</div>
<div style="position:absolute;left:525.60px;width:100px;text-align:right;top:290.00px;font-size:14.5px;line-height:14.5px;color:#000;white-space:nowrap;"><u>G</u></div>
<div style="position:absolute;left:702px;top:285px;width:19px;height:11px;background:#e5e5e5;border:1px solid #adadad;box-sizing:border-box"></div>
<div style="position:absolute;left:702px;top:296px;width:19px;height:11px;background:#e5e5e5;border:1px solid #adadad;box-sizing:border-box"></div>
<svg style="position:absolute;left:702px;top:283px" width="19" height="26" viewBox="0 0 19 26"><path d="M5.5 9L9.5 5L13.5 9Z" fill="#000"/><path d="M5.5 17L9.5 21L13.5 17Z" fill="#000"/></svg>
<div style="position:absolute;left:640px;top:315px;width:83px;height:26px;background:#fff;border:1px solid #a6a6ad;box-sizing:border-box"></div>
<div style="position:absolute;left:643.70px;top:322.00px;font-size:14.5px;line-height:14.5px;color:#000;white-space:nowrap;">207</div>
<div style="position:absolute;left:525.60px;width:100px;text-align:right;top:322.00px;font-size:14.5px;line-height:14.5px;color:#000;white-space:nowrap;"><u>B</u></div>
<div style="position:absolute;left:702px;top:317px;width:19px;height:11px;background:#e5e5e5;border:1px solid #adadad;box-sizing:border-box"></div>
<div style="position:absolute;left:702px;top:328px;width:19px;height:11px;background:#e5e5e5;border:1px solid #adadad;box-sizing:border-box"></div>
<svg style="position:absolute;left:702px;top:315px" width="19" height="26" viewBox="0 0 19 26"><path d="M5.5 9L9.5 5L13.5 9Z" fill="#000"/><path d="M5.5 17L9.5 21L13.5 17Z" fill="#000"/></svg>
<div style="position:absolute;left:640px;top:347px;width:83px;height:26px;background:#fff;border:1px solid #a6a6ad;box-sizing:border-box"></div>
<div style="position:absolute;left:642.50px;top:354.00px;font-size:14.5px;line-height:14.5px;color:#000;white-space:nowrap;transform:scaleX(1.0284);transform-origin:0 0;">729fcf</div>
<div style="position:absolute;left:607.64px;top:354.00px;font-size:14.5px;line-height:14.5px;color:#000;white-space:nowrap;transform:scaleX(0.9761);transform-origin:0 0;"><u>H</u>ex</div>
<div style="position:absolute;left:608px;top:386px;width:114px;height:33px;background:#e1e1e1;border:1px solid #adadad;box-sizing:border-box"></div>
<div style="position:absolute;left:639.79px;top:396.00px;font-size:14.5px;line-height:14.5px;color:#000;white-space:nowrap;transform:scaleX(1.0080);transform-origin:0 0;">Pick</div>
<svg style="position:absolute;left:666px;top:388px" width="30" height="28" viewBox="0 0 30 28"><path d="M22.6 15.4A7.75 7.75 0 1 0 18.3 21.2L18.6 17.3Q18.8 15.8 20.4 15.8L22.6 15.4Z" fill="#fff" stroke="#2b2b2b" stroke-width="1.15" stroke-linejoin="round"/><rect x="14" y="8" width="2" height="2" fill="#2eaa4a"/><rect x="11" y="10" width="2" height="2" fill="#e8463c"/><rect x="17" y="10" width="2" height="2" fill="#f7a04a"/><rect x="10" y="13" width="2" height="2" fill="#2e8fd6"/><circle cx="14.6" cy="18.4" r="1.25" fill="none" stroke="#2b2b2b" stroke-width="1"/></svg>
</body></html>
